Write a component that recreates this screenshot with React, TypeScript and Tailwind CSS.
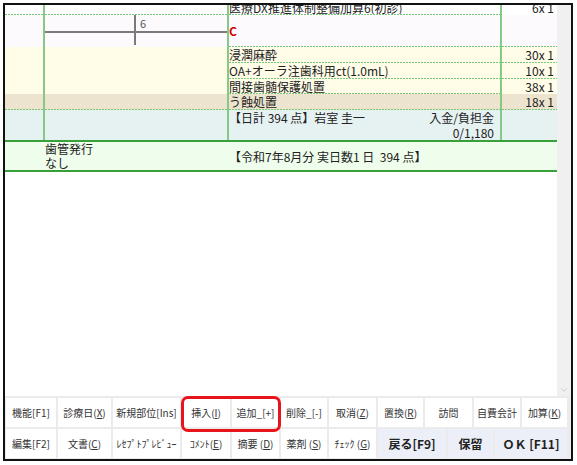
import * as React from "react";
import { ChevronDown } from "lucide-react";

const DOTS =
  "h-px shrink-0 bg-[repeating-linear-gradient(90deg,#78c878_0_2px,transparent_2px_3px)]";

function Dots() {
  return <div className={DOTS} />;
}

interface ItemRowProps {
  h: string;
  bg: string;
  desc?: React.ReactNode;
  val?: string;
  dotAll?: boolean;
  c2?: React.ReactNode;
  extra?: string;
}

function ItemRow({ h, bg, desc, val, dotAll, c2, extra = "" }: ItemRowProps) {
  return (
    <div className={`flex shrink-0 ${h} ${bg} ${extra}`}>
      <div className="w-[40px] shrink-0 flex flex-col border-r-2 border-[#86c986]">
        <div className="flex-1" />
        {dotAll && <Dots />}
      </div>
      <div className="w-[184px] shrink-0 flex flex-col border-r-2 border-[#86c986]">
        <div className="flex-1 min-h-0">{c2}</div>
        {dotAll && <Dots />}
      </div>
      <div className="w-[273px] shrink-0 flex flex-col border-r-2 border-[#86c986]">
        <div className="flex-1 flex items-center whitespace-nowrap overflow-hidden">{desc}</div>
        <Dots />
      </div>
      <div className="flex-1 flex flex-col">
        <div className="flex-1 flex items-center justify-end pr-[3px] whitespace-nowrap">{val}</div>
        <Dots />
      </div>
    </div>
  );
}

function ToothChart() {
  return (
    <div className="h-full flex flex-col">
      <div className="h-[16px] flex">
        <div className="w-[91px] border-r-2 border-[#7a7a7a]" />
        <div className="pl-[4px] pt-[2px] text-[11px] leading-[13px] text-[#555]">6</div>
      </div>
      <div className="h-[2px] bg-[#7a7a7a]" />
      <div className="h-[12px] flex">
        <div className="w-[91px] border-r-2 border-[#7a7a7a]" />
      </div>
    </div>
  );
}

type Btn = { w: string; label: React.ReactNode; strong?: boolean };

const row1: Btn[] = [
  { w: "w-[50px]", label: "機能[F1]" },
  { w: "w-[53px]", label: <>診療日(<u>X</u>)</> },
  { w: "w-[67px]", label: "新規部位[Ins]" },
  { w: "w-[48px]", label: <>挿入(<u>I</u>)</> },
  { w: "w-[47px]", label: "追加_[+]" },
  { w: "w-[46px]", label: "削除_[-]" },
  { w: "w-[47px]", label: <>取消(<u>Z</u>)</> },
  { w: "w-[45px]", label: <>置換(<u>R</u>)</> },
  { w: "w-[47px]", label: "訪問" },
  { w: "w-[46px]", label: "自費会計" },
  { w: "flex-1", label: <>加算(<u>K</u>)</> },
];

const row2: Btn[] = [
  { w: "w-[50px]", label: "編集[F2]" },
  { w: "w-[53px]", label: <>文書(<u>C</u>)</> },
  { w: "w-[67px]", label: "ﾚｾﾌﾟﾄﾌﾟﾚﾋﾞｭｰ" },
  { w: "w-[48px]", label: <>ｺﾒﾝﾄ(<u>E</u>)</> },
  { w: "w-[47px]", label: <>摘要 (<u>D</u>)</> },
  { w: "w-[46px]", label: <>薬剤 (<u>S</u>)</> },
  { w: "w-[47px]", label: <>ﾁｪｯｸ (<u>G</u>)</> },
  { w: "w-[68px]", label: "戻る[F9]", strong: true },
  { w: "w-[45px]", label: "保留", strong: true },
  { w: "flex-1", label: "ＯＫ [F11]", strong: true },
];

function ButtonRow({ items }: { items: Btn[] }) {
  return (
    <div className="h-[29px] flex gap-[2px]">
      {items.map((b, i) => (
        <div
          key={i}
          className={`${b.w} shrink-0 h-full flex items-center justify-center whitespace-nowrap ${
            b.strong
              ? "bg-[#eceff7] text-[12px] font-bold text-[#222]"
              : "bg-white text-[10px] text-[#333]"
          }`}
        >
          {b.label}
        </div>
      ))}
    </div>
  );
}

export default function App() {
  return (
    <div className="w-[577px] h-[465px] bg-white pt-[3px] pl-[3px] font-['Noto_Sans_CJK_JP','Noto_Sans',sans-serif] text-[12px] text-[#222]">
      <div className="w-[570px] h-[458px] border-2 border-[#111] flex flex-col">
        <div className="h-[391px] flex">
          <div className="flex-1 overflow-hidden flex flex-col leading-[15px]">
            <ItemRow
              h="h-[15px]"
              bg="bg-white"
              extra="-mt-[5px]"
              dotAll
              desc="医療DX推進体制整備加算6(初診)"
              val="6x 1"
            />
            <ItemRow
              h="h-[32px]"
              bg="bg-[#fdfafd]"
              c2={<ToothChart />}
              desc={<span className="text-[#d00000] font-bold">C</span>}
            />
            <ItemRow h="h-[16px]" bg="bg-[#fffde8]" desc="浸潤麻酔" val="30x 1" />
            <ItemRow h="h-[16px]" bg="bg-[#fffde8]" desc="OA+オーラ注歯科用ct(1.0mL)" val="10x 1" />
            <ItemRow h="h-[15px]" bg="bg-[#fffde8]" desc="間接歯髄保護処置" val="38x 1" />
            <ItemRow h="h-[16px]" bg="bg-[#ece4ce]" dotAll desc="う蝕処置" val="18x 1" />

            <div className="flex shrink-0 h-[30px] bg-[#e6f1f2]">
              <div className="w-[40px] shrink-0 border-r-2 border-[#86c986]" />
              <div className="w-[184px] shrink-0 border-r-2 border-[#86c986]" />
              <div className="w-[273px] shrink-0 border-r-2 border-[#86c986] pr-[6px] flex flex-col whitespace-nowrap">
                <div className="flex justify-between">
                  <span className="whitespace-pre">【日計 394 点】岩室 圭一</span>
                  <span>入金/負担金</span>
                </div>
                <div className="text-right">0/1,180</div>
              </div>
              <div className="flex-1" />
            </div>
            <div className="h-[2px] shrink-0 bg-[#38a038]" />

            <div className="flex shrink-0 h-[28px] bg-[#effeec]">
              <div className="w-[224px] shrink-0 pl-[40px] flex flex-col justify-center leading-[14px]">
                <span>歯管発行</span>
                <span>なし</span>
              </div>
              <div className="flex-1 flex items-center whitespace-pre">【令和7年8月分 実日数1 日  394 点】</div>
            </div>
            <div className="h-[2px] shrink-0 bg-[#38a038]" />
          </div>

          <div className="w-[14px] shrink-0 bg-[#f0f0f0] flex flex-col justify-end items-center pb-[1px]">
            <ChevronDown className="size-[10px] text-[#b4b4b4]" strokeWidth={1.5} />
          </div>
        </div>

        <div className="relative h-[63px] bg-[#ebebeb] flex flex-col gap-[2px] pt-[2px] pl-[1px] pr-[4px]">
          <ButtonRow items={row1} />
          <ButtonRow items={row2} />
          <div className="absolute left-[176px] top-0 w-[100px] h-[36px] border-[3px] border-[#e8141b] rounded-[7px]" />
        </div>
      </div>
    </div>
  );
}
